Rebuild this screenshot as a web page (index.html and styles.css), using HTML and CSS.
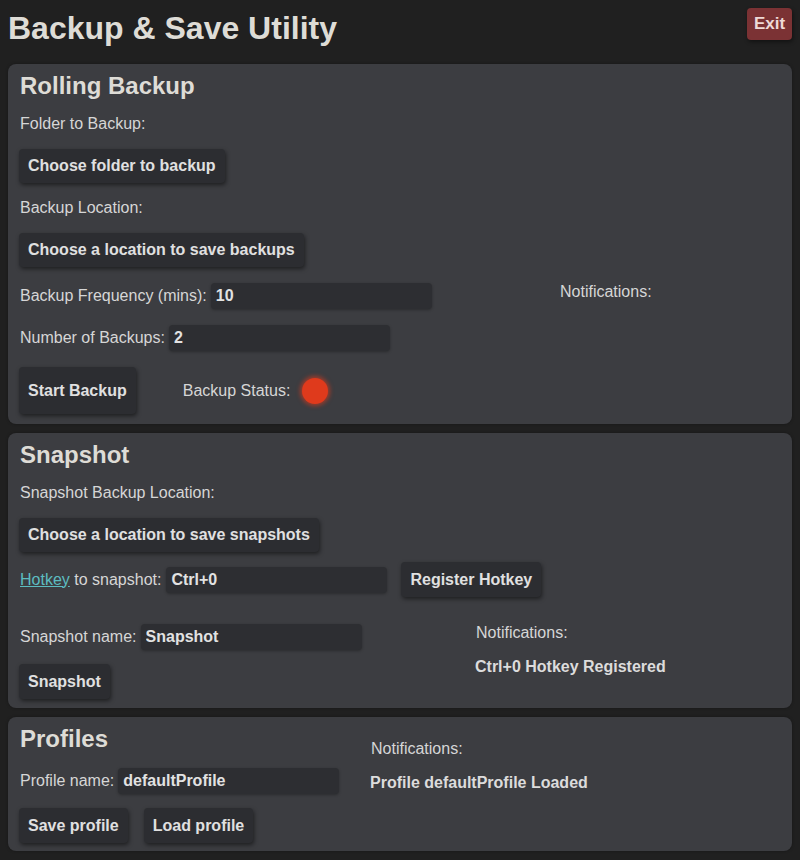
FILE: index.html
```html
<!DOCTYPE html>
<html lang="en">
<head>
<meta charset="utf-8">
<title>Backup &amp; Save Utility</title>
<link rel="stylesheet" href="styles.css">
</head>
<body>
<header class="topbar">
  <h1 class="app-title">Backup &amp; Save Utility</h1>
  <button class="exit-btn">Exit</button>
</header>
<main class="panels">
  <section class="panel panel-rolling">
    <h2 class="panel-title">Rolling Backup</h2>
    <p class="label">Folder to Backup:</p>
    <div class="btn-row"><button class="btn">Choose folder to backup</button></div>
    <p class="label">Backup Location:</p>
    <div class="btn-row"><button class="btn">Choose a location to save backups</button></div>
    <div class="split split-rolling">
      <div class="col">
        <div class="field-row"><span class="label">Backup Frequency (mins):</span><input class="field" type="text" value="10"></div>
        <div class="field-row"><span class="label">Number of Backups:</span><input class="field" type="text" value="2"></div>
        <div class="status-row">
          <button class="btn btn-tall">Start Backup</button>
          <span class="label status-label">Backup Status:</span>
          <span class="status-dot"></span>
        </div>
      </div>
      <div class="notes">
        <p class="label">Notifications:</p>
      </div>
    </div>
  </section>

  <section class="panel panel-snapshot">
    <h2 class="panel-title">Snapshot</h2>
    <p class="label">Snapshot Backup Location:</p>
    <div class="btn-row"><button class="btn">Choose a location to save snapshots</button></div>
    <div class="field-row hotkey-row">
      <span class="label"><a class="link" href="#">Hotkey</a> to snapshot:</span>
      <input class="field" type="text" value="Ctrl+0">
      <button class="btn btn-register">Register Hotkey</button>
    </div>
    <div class="split split-snapshot">
      <div class="col col-tight">
        <div class="field-row"><span class="label">Snapshot name:</span><input class="field" type="text" value="Snapshot"></div>
        <div class="btn-row"><button class="btn btn-35">Snapshot</button></div>
      </div>
      <div class="notes">
        <p class="label">Notifications:</p>
        <p class="message">Ctrl+0 Hotkey Registered</p>
      </div>
    </div>
  </section>

  <section class="panel panel-profiles">
    <div class="split split-profiles">
      <div class="col">
        <h2 class="panel-title">Profiles</h2>
        <div class="field-row"><span class="label">Profile name:</span><input class="field" type="text" value="defaultProfile"></div>
        <div class="btn-row btn-pair">
          <button class="btn btn-35">Save profile</button>
          <button class="btn btn-35">Load profile</button>
        </div>
      </div>
      <div class="notes notes-profiles">
        <p class="label">Notifications:</p>
        <p class="message">Profile defaultProfile Loaded</p>
      </div>
    </div>
  </section>
</main>
</body>
</html>
```

FILE: styles.css
```css
* { box-sizing: border-box; }

html, body {
  margin: 0;
  padding: 0;
  background: #202020;
}

body {
  padding: 0 8px 8px;
  font-family: "Liberation Sans", Arial, sans-serif;
  color: #d8d8d8;
  font-size: 16px;
}

.topbar {
  display: flex;
  justify-content: space-between;
  align-items: flex-start;
  height: 56px;
  padding-top: 8px;
  margin-bottom: 8px;
}

.app-title {
  margin: 2px 0 0;
  font-size: 32px;
  line-height: 37px;
  font-weight: bold;
  color: #dedcd6;
}

.exit-btn {
  width: 45px;
  height: 32px;
  border: none;
  border-radius: 4px;
  background: #7b3234;
  color: #eed9d6;
  font-family: inherit;
  font-weight: bold;
  font-size: 17px;
  padding: 0;
  box-shadow: 1px 2px 4px rgba(0, 0, 0, 0.45);
}

.panels {
  display: flex;
  flex-direction: column;
  gap: 9px;
}

.panel {
  background: #3c3d41;
  border-radius: 8px;
  padding: 8px 11px 10px 11px;
  display: flex;
  flex-direction: column;
  gap: 16px;
  box-shadow: 0 0 3px rgba(0, 0, 0, 0.35);
}

.panel-snapshot { padding-bottom: 9px; }
.panel-profiles { padding-bottom: 8px; }

.panel-title {
  margin: 0 0 0 1px;
  font-size: 24px;
  line-height: 27px;
  font-weight: bold;
  color: #dedcd6;
}

.label {
  margin: 0;
  font-size: 16px;
  line-height: 18px;
  color: #d6d6d6;
  white-space: nowrap;
}

p.label { margin-left: 1px; }

.message {
  margin: 0;
  font-size: 16px;
  line-height: 18px;
  font-weight: bold;
  color: #dcdcdc;
  white-space: nowrap;
}

.link {
  color: #5cbcc0;
  text-decoration: underline;
}

.btn-row {
  display: flex;
}

.btn-pair { gap: 16px; }

.btn {
  height: 34px;
  padding: 0 9px;
  border: none;
  border-radius: 4px;
  background: #2c2d31;
  color: #e0e0e0;
  font-family: inherit;
  font-size: 16px;
  font-weight: bold;
  box-shadow: 1px 2px 4px rgba(0, 0, 0, 0.5);
  white-space: nowrap;
}

.btn-35 { height: 35px; }

.btn-tall { height: 47px; }

.btn-register {
  height: 35px;
  margin-left: 9px;
}

.field-row {
  display: flex;
  align-items: center;
  gap: 4px;
}

.field-row .label { margin-left: 1px; }

.hotkey-row {
  margin-top: -6px;
  gap: 5px;
}

.field {
  width: 221px;
  height: 26px;
  border: none;
  border-radius: 4px;
  background: #2d2e32;
  color: #e2e2e2;
  font-family: inherit;
  font-size: 16px;
  font-weight: bold;
  padding: 0 5px;
  box-shadow: 0 1px 3px rgba(0, 0, 0, 0.3);
  outline: none;
}

.split {
  display: grid;
  align-items: start;
}

.split-rolling { grid-template-columns: 540px 1fr; }
.split-snapshot { grid-template-columns: 456px 1fr; margin-top: 11px; }
.split-profiles { grid-template-columns: 351px 1fr; }

.col {
  display: flex;
  flex-direction: column;
  gap: 16px;
}

.col-tight { gap: 14px; }

.split-profiles .col .btn-row { margin-top: -2px; }

.notes {
  display: flex;
  flex-direction: column;
  gap: 16px;
}

.notes-profiles { margin-top: 15px; }

.status-row {
  display: flex;
  align-items: center;
}

.status-label { margin-left: 47px; }

.status-dot {
  width: 26px;
  height: 26px;
  margin-left: 12px;
  border-radius: 50%;
  background: #df3a1c;
  box-shadow: 0 0 4px 2px rgba(223, 58, 28, 0.6);
}
```
